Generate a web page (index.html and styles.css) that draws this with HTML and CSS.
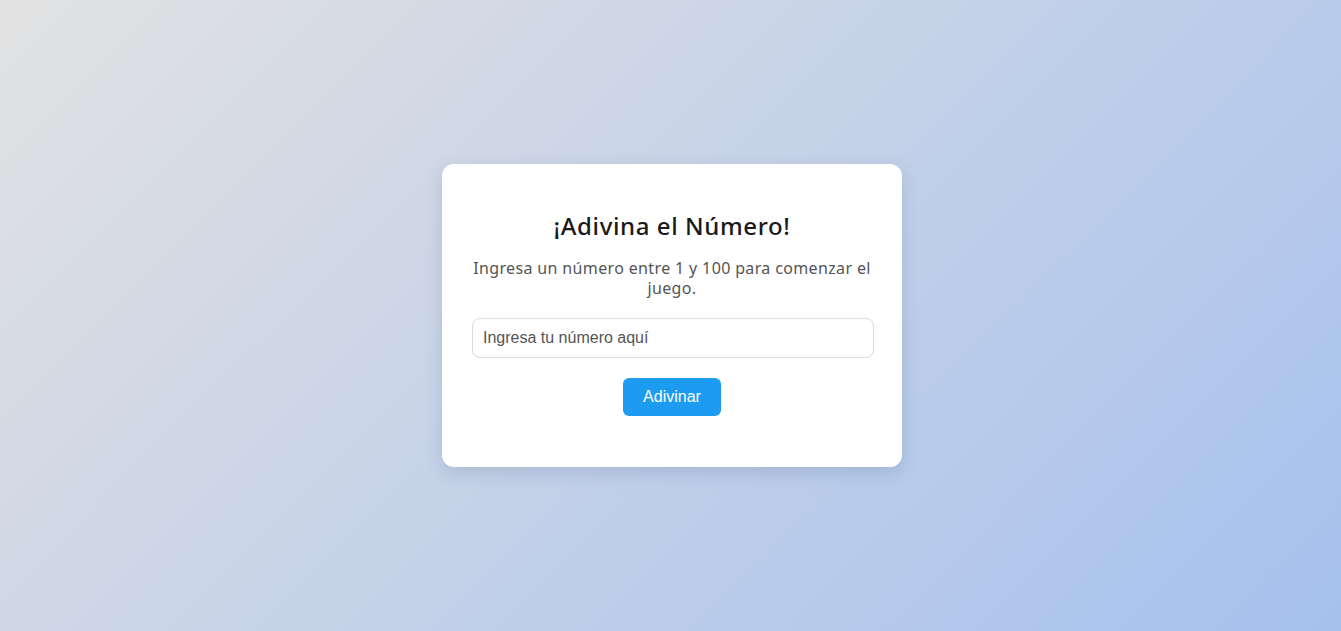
FILE: index.html
```html
<!DOCTYPE html>
<html lang="es">
<head>
<meta charset="utf-8">
<title>Adivina el Número</title>
<link rel="stylesheet" href="styles.css">
</head>
<body>
<main class="page">
  <section class="card">
    <h1 class="title">¡Adivina el Número!</h1>
    <p class="intro">Ingresa un número entre 1 y 100 para comenzar el juego.</p>
    <input class="guess-input" type="number" placeholder="Ingresa tu número aquí">
    <button class="guess-btn" type="button">Adivinar</button>
  </section>
</main>
</body>
</html>
```
FILE: styles.css
```css
* { box-sizing: border-box; }
html, body { margin: 0; padding: 0; }
body {
  font-family: "Noto Sans", "DejaVu Sans", sans-serif;
  background: linear-gradient(135deg, #e2e2e2 0%, #a6c1ee 100%);
  min-height: 100vh;
}
.page {
  min-height: 100vh;
  padding-left: 3px;
  display: flex;
  align-items: center;
  justify-content: center;
}
.card {
  width: 460px;
  background: #fff;
  border-radius: 12px;
  padding: 30px 30px 51px;
  box-shadow: 0 6px 18px rgba(60, 80, 130, 0.18);
  display: flex;
  flex-direction: column;
  align-items: center;
  text-align: center;
}
.title {
  margin: 17px 0 19px;
  font-size: 24px;
  line-height: 29px;
  font-weight: 500;
  color: #1a1a1a;
  letter-spacing: 0.6px;
}
.intro {
  margin: 0 0 20px;
  font-size: 16px;
  line-height: 19.5px;
  color: #555;
  letter-spacing: 0.36px;
}
.guess-input {
  align-self: flex-start;
  width: 402px;
  height: 40px;
  padding: 0 10px;
  border: 1px solid #dcdcdc;
  border-radius: 8px;
  font-family: "Liberation Sans", Arial, sans-serif;
  font-size: 16px;
  color: #333;
  outline: none;
}
.guess-input::placeholder { color: #555; }
.guess-btn {
  margin-top: 20px;
  width: 98px;
  height: 38px;
  border: none;
  border-radius: 6px;
  background: #1d9bf0;
  color: #fff;
  font-family: "Liberation Sans", Arial, sans-serif;
  font-size: 16px;
  cursor: pointer;
}
```
